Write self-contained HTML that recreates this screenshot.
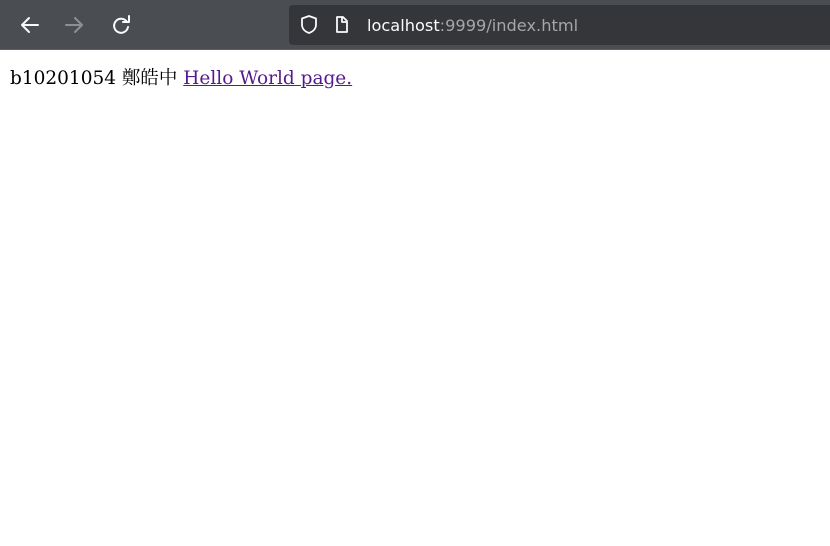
<!DOCTYPE html>
<html><head><meta charset="utf-8"><style>
html,body{margin:0;padding:0;width:830px;height:546px;overflow:hidden;background:#fff}
.bar{position:absolute;left:0;top:0;width:830px;height:49px;background:#4a4d52;border-bottom:1px solid #5c5f64}
.url{position:absolute;left:289px;top:5px;width:545px;height:40px;background:#35363a;border-radius:4px}
.ut{position:absolute;left:367px;top:16px;font:16.2px "DejaVu Sans",sans-serif;color:#fbfbfe;white-space:nowrap}
.ut span{color:#a5a5aa}
svg{position:absolute}
.content{position:absolute;left:10px;top:64px;font:18.5px "DejaVu Serif","Noto Serif CJK SC",serif;color:#000;white-space:nowrap}
a{color:#551a8b}
</style></head><body>
<div class="bar"></div>
<svg width="830" height="50" style="left:0;top:0">
<g fill="none" stroke-width="2" stroke-linecap="round" stroke-linejoin="round">
<path d="M22 25h16M29 18l-7 7 7 7" stroke="#fbfbfe"/>
<path d="M66 25h16M75 18l7 7-7 7" stroke="#8f9094"/>
<path d="M127 22a7 7 0 1 0 1 5" stroke="#fbfbfe"/>
<path d="M129 16v6h-6" stroke="#fbfbfe"/>
</g>
</svg>
<div class="url"></div>
<svg width="60" height="30" style="left:295px;top:11px" fill="none" stroke="#fbfbfe" stroke-width="1.8" stroke-linejoin="round">
<path d="M14 5l7 2.5v6c0 5-4 7.5-7 8.5-3-1-7-3.5-7-8.5v-6z"/>
<path d="M42 6h6l4 4v11h-10z"/><path d="M47 6v5h5"/>
</svg>
<div class="ut">localhost<span>:9999/index.html</span></div>
<div class="content">b10201054 鄭皓中 <a href="#">Hello World page.</a></div>
</body></html>
